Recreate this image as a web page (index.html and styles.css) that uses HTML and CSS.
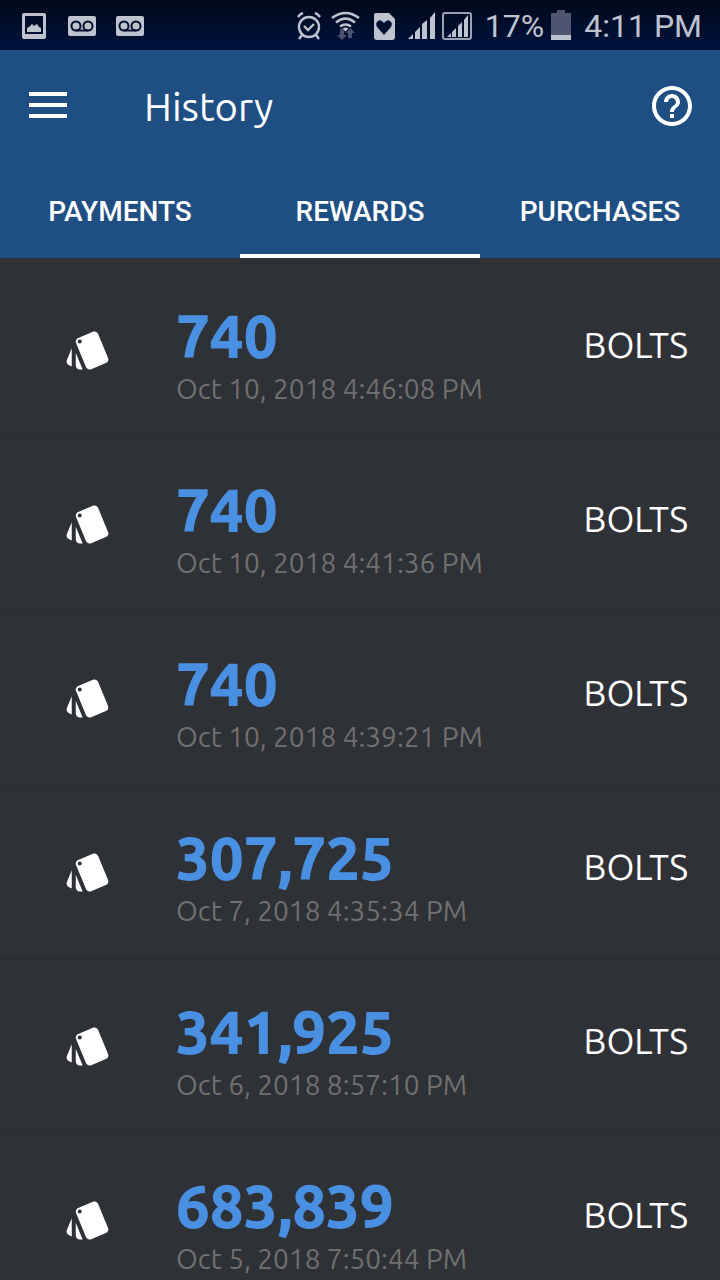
FILE: index.html
```html
<!DOCTYPE html>
<html lang="en">
<head>
    <meta charset="UTF-8">
    <meta name="viewport" content="width=device-width, initial-scale=1.0">
    <title>History</title>
    <link rel="stylesheet" href="styles.css">
</head>
<body>

    <svg class="defs" aria-hidden="true">
        <symbol id="voicemail" viewBox="0 0 28 20">
            <rect width="28" height="20" rx="2" fill="#bfc3cf"/>
            <g fill="none" stroke="#020e30" stroke-width="2">
                <circle cx="8" cy="10" r="4.500"/>
                <circle cx="20" cy="10" r="4.500"/>
                <path d="M8 14.500h12"/>
            </g>
        </symbol>
        <symbol id="cards" viewBox="0 0 24 24">
            <path d="M2.53 19.65l1.34.56v-9.03l-2.43 5.86c-.41 1.02.08 2.19 1.09 2.61zm19.5-3.7L17.07 3.98c-.31-.75-1.04-1.21-1.81-1.23-.26 0-.53.04-.79.15L7.1 5.95c-.75.31-1.21 1.03-1.23 1.8-.01.27.04.54.15.8l4.96 11.97c.31.76 1.05 1.22 1.83 1.23.26 0 .52-.05.77-.15l7.36-3.05c1.02-.42 1.51-1.59 1.09-2.6zM7.88 8.75c-.55 0-1-.45-1-1s.45-1 1-1 1 .45 1 1-.45 1-1 1zm-2 11c0 1.1.9 2 2 2h1.45l-3.45-8.34v6.34z"/>
        </symbol>
    </svg>

    <div class="status-bar">
        <div class="notifications">
            <svg width="26" height="26" viewBox="0 0 26 26">
                <path fill="#bfc3cf" fill-rule="evenodd" d="M2 0h20a2 2 0 0 1 2 2v22a2 2 0 0 1-2 2H2a2 2 0 0 1-2-2V2a2 2 0 0 1 2-2zM3 3v18h18V3z"/>
                <path fill="#bfc3cf" d="M5 19v-4l2-1 3-3 2 2 3-2 2 3 2 1v4z"/>
            </svg>
            <svg width="28" height="20"><use href="#voicemail"/></svg>
            <svg width="28" height="20"><use href="#voicemail"/></svg>
        </div>
        <div class="indicators">
            <svg width="28" height="30" viewBox="0 0 28 30">
                <g fill="none" stroke="#bfc3cf" stroke-width="2.400">
                    <circle cx="14" cy="17" r="10"/>
                    <path d="M9 16l4 4 6-6M3 7q2-3 5-4M25 7q-2-3-5-4M7 25l-3 4M21 25l3 4"/>
                </g>
            </svg>
            <svg width="31" height="30" viewBox="0 0 31 30">
                <g fill="none" stroke="#bfc3cf" stroke-width="2.600">
                    <path d="M2 8q13.500-10 27 0M6 12.500q9.500-8 19 0M10 16.500q5.500-4 11 0"/>
                </g>
                <path fill="#bfc3cf" d="M12.500 18.500q3-2 6 0l-3 3z"/>
                <path fill="#4a5270" d="M10 19h4v6h3l-5 5-5-5h3zM18 28v-5h-2l4.500-5 4.500 5h-3v5z"/>
            </svg>
            <svg width="33" height="30" viewBox="0 0 33 30">
                <path fill="#bfc3cf" d="M8 3h13l6 6v18q0 3-3 3H9q-3 0-3-3V5q0-2 2-2z"/>
                <path fill="#020e30" d="M16 25l-7-8q-2-4 1-6 3-2 6 2 3-4 6-2 3 2 1 6z"/>
            </svg>
            <svg width="27" height="30" viewBox="0 0 27 30">
                <path fill="#bfc3cf" d="M0 29l5-5v5zM7 29v-7l5-5v12zM14 29V14l5-4v19zM22 29V8l5-6v27z"/>
            </svg>
            <svg width="30" height="30" viewBox="0 0 30 30">
                <rect x="1" y="3" width="28" height="26" rx="2" fill="none" stroke="#9da2b3" stroke-width="2"/>
                <path fill="#bfc3cf" d="M5 27l4-4v4zM10 27v-5l4-4v9zM16 27V16l4-4v15zM22 27V10l4-5v22z"/>
            </svg>
            <span class="status-text">17%</span>
            <svg width="20" height="30" viewBox="0 0 20 30">
                <path fill="#4d5571" d="M6 0h8v3h6v22H0V3h6z"/>
                <path fill="#bfc3cf" d="M0 25h20v5H0z"/>
            </svg>
            <span class="status-text">4:11 PM</span>
        </div>
    </div>

    <header class="app-header">
        <div class="toolbar">
            <button class="icon-button" aria-label="Menu">
                <svg width="38" height="28" viewBox="0 0 38 28">
                    <path fill="#fff" d="M0 0h38v4H0zM0 11h38v4H0zM0 22h38v4H0z"/>
                </svg>
            </button>
            <h1>History</h1>
            <button class="icon-button" aria-label="Help">
                <svg width="48" height="48" viewBox="0 0 24 24">
                    <path fill="#fff" d="M11 18h2v-2h-2v2zm1-16C6.480 2 2 6.480 2 12s4.480 10 10 10 10-4.480 10-10S17.520 2 12 2zm0 18c-4.410 0-8-3.590-8-8s3.590-8 8-8 8 3.590 8 8-3.590 8-8 8zm0-14c-2.210 0-4 1.790-4 4h2c0-1.100.900-2 2-2s2 .900 2 2c0 2-3 1.750-3 5h2c0-2.250 3-2.500 3-5 0-2.210-1.790-4-4-4z"/>
                </svg>
            </button>
        </div>
        <nav class="tabs">
            <button class="tab">PAYMENTS</button>
            <button class="tab active">REWARDS</button>
            <button class="tab">PURCHASES</button>
        </nav>
    </header>

    <ul class="rewards">
        <li class="reward">
            <svg class="reward-icon"><use href="#cards"/></svg>
            <div class="reward-info">
                <div class="amount">740</div>
                <div class="date">Oct 10, 2018 4:46:08 PM</div>
            </div>
            <span class="unit">BOLTS</span>
        </li>
        <li class="reward">
            <svg class="reward-icon"><use href="#cards"/></svg>
            <div class="reward-info">
                <div class="amount">740</div>
                <div class="date">Oct 10, 2018 4:41:36 PM</div>
            </div>
            <span class="unit">BOLTS</span>
        </li>
        <li class="reward">
            <svg class="reward-icon"><use href="#cards"/></svg>
            <div class="reward-info">
                <div class="amount">740</div>
                <div class="date">Oct 10, 2018 4:39:21 PM</div>
            </div>
            <span class="unit">BOLTS</span>
        </li>
        <li class="reward">
            <svg class="reward-icon"><use href="#cards"/></svg>
            <div class="reward-info">
                <div class="amount">307,725</div>
                <div class="date">Oct 7, 2018 4:35:34 PM</div>
            </div>
            <span class="unit">BOLTS</span>
        </li>
        <li class="reward">
            <svg class="reward-icon"><use href="#cards"/></svg>
            <div class="reward-info">
                <div class="amount">341,925</div>
                <div class="date">Oct 6, 2018 8:57:10 PM</div>
            </div>
            <span class="unit">BOLTS</span>
        </li>
        <li class="reward">
            <svg class="reward-icon"><use href="#cards"/></svg>
            <div class="reward-info">
                <div class="amount">683,839</div>
                <div class="date">Oct 5, 2018 7:50:44 PM</div>
            </div>
            <span class="unit">BOLTS</span>
        </li>
    </ul>

</body>
</html>
```
FILE: styles.css
```css
* {
    box-sizing: border-box;
}
body {
    margin: 0;
    height: 100vh;
    display: flex;
    flex-direction: column;
    background-color: #2e3136;
    color: white;
    font-family: Ubuntu, "Noto Sans", sans-serif;
}
svg {
    display: block;
    flex-shrink: 0;
}
button {
    padding: 0;
    border: none;
    background: none;
    color: white;
    cursor: pointer;
}
.defs {
    display: none;
}

/* status bar */
.status-bar {
    flex-shrink: 0;
    display: flex;
    justify-content: space-between;
    align-items: center;
    height: 50px;
    padding: 2px 18px 0 22px;
    background: linear-gradient(#000819, #00133f);
}
.notifications {
    display: flex;
    align-items: center;
    gap: 20px;
}
.indicators {
    display: flex;
    align-items: center;
    gap: 7px;
}
.indicators svg {
    margin-bottom: 2px;
}
.status-text {
    padding-left: 6px;
    color: #bfc3cf;
    font-family: Roboto, sans-serif;
    font-size: 32px;
    line-height: 48px;
    white-space: nowrap;
}

/* header */
.app-header {
    flex-shrink: 0;
    background-color: #1f4e82;
}
.toolbar {
    display: flex;
    align-items: center;
    height: 112px;
    padding: 0 24px;
}
.icon-button {
    display: flex;
    align-items: center;
    justify-content: center;
    width: 48px;
    height: 48px;
}
.toolbar h1 {
    flex: 1;
    margin: 0;
    padding: 2px 0 0 72px;
    font-size: 40px;
    font-weight: 400;
    line-height: 48px;
}
.tabs {
    display: flex;
    height: 96px;
}
.tab {
    flex: 1;
    padding-top: 2px;
    border-top: 4px solid transparent;
    border-bottom: 4px solid transparent;
    font-family: Roboto, sans-serif;
    font-size: 28px;
    font-weight: 500;
}
.tab.active {
    border-bottom-color: white;
}

/* rewards list */
.rewards {
    flex: 1;
    min-height: 0;
    margin: 0;
    padding: 5px 0 0;
    overflow-y: auto;
    scrollbar-width: none;
    list-style: none;
}
.reward {
    display: flex;
    align-items: center;
    height: 174px;
    padding: 0 32px 2px 64px;
    border-top: 1px solid #282b2f;
}
.reward-icon {
    width: 48px;
    height: 48px;
    fill: white;
}
.reward-info {
    flex: 1;
    padding: 12px 0 0 64px;
}
.amount {
    color: #4a90e2;
    font-size: 60px;
    font-weight: 800;
    line-height: 66px;
}
.date {
    color: #707070;
    font-size: 28px;
    line-height: 40px;
}
.unit {
    padding-bottom: 10px;
    font-size: 36px;
    line-height: 48px;
}
```
